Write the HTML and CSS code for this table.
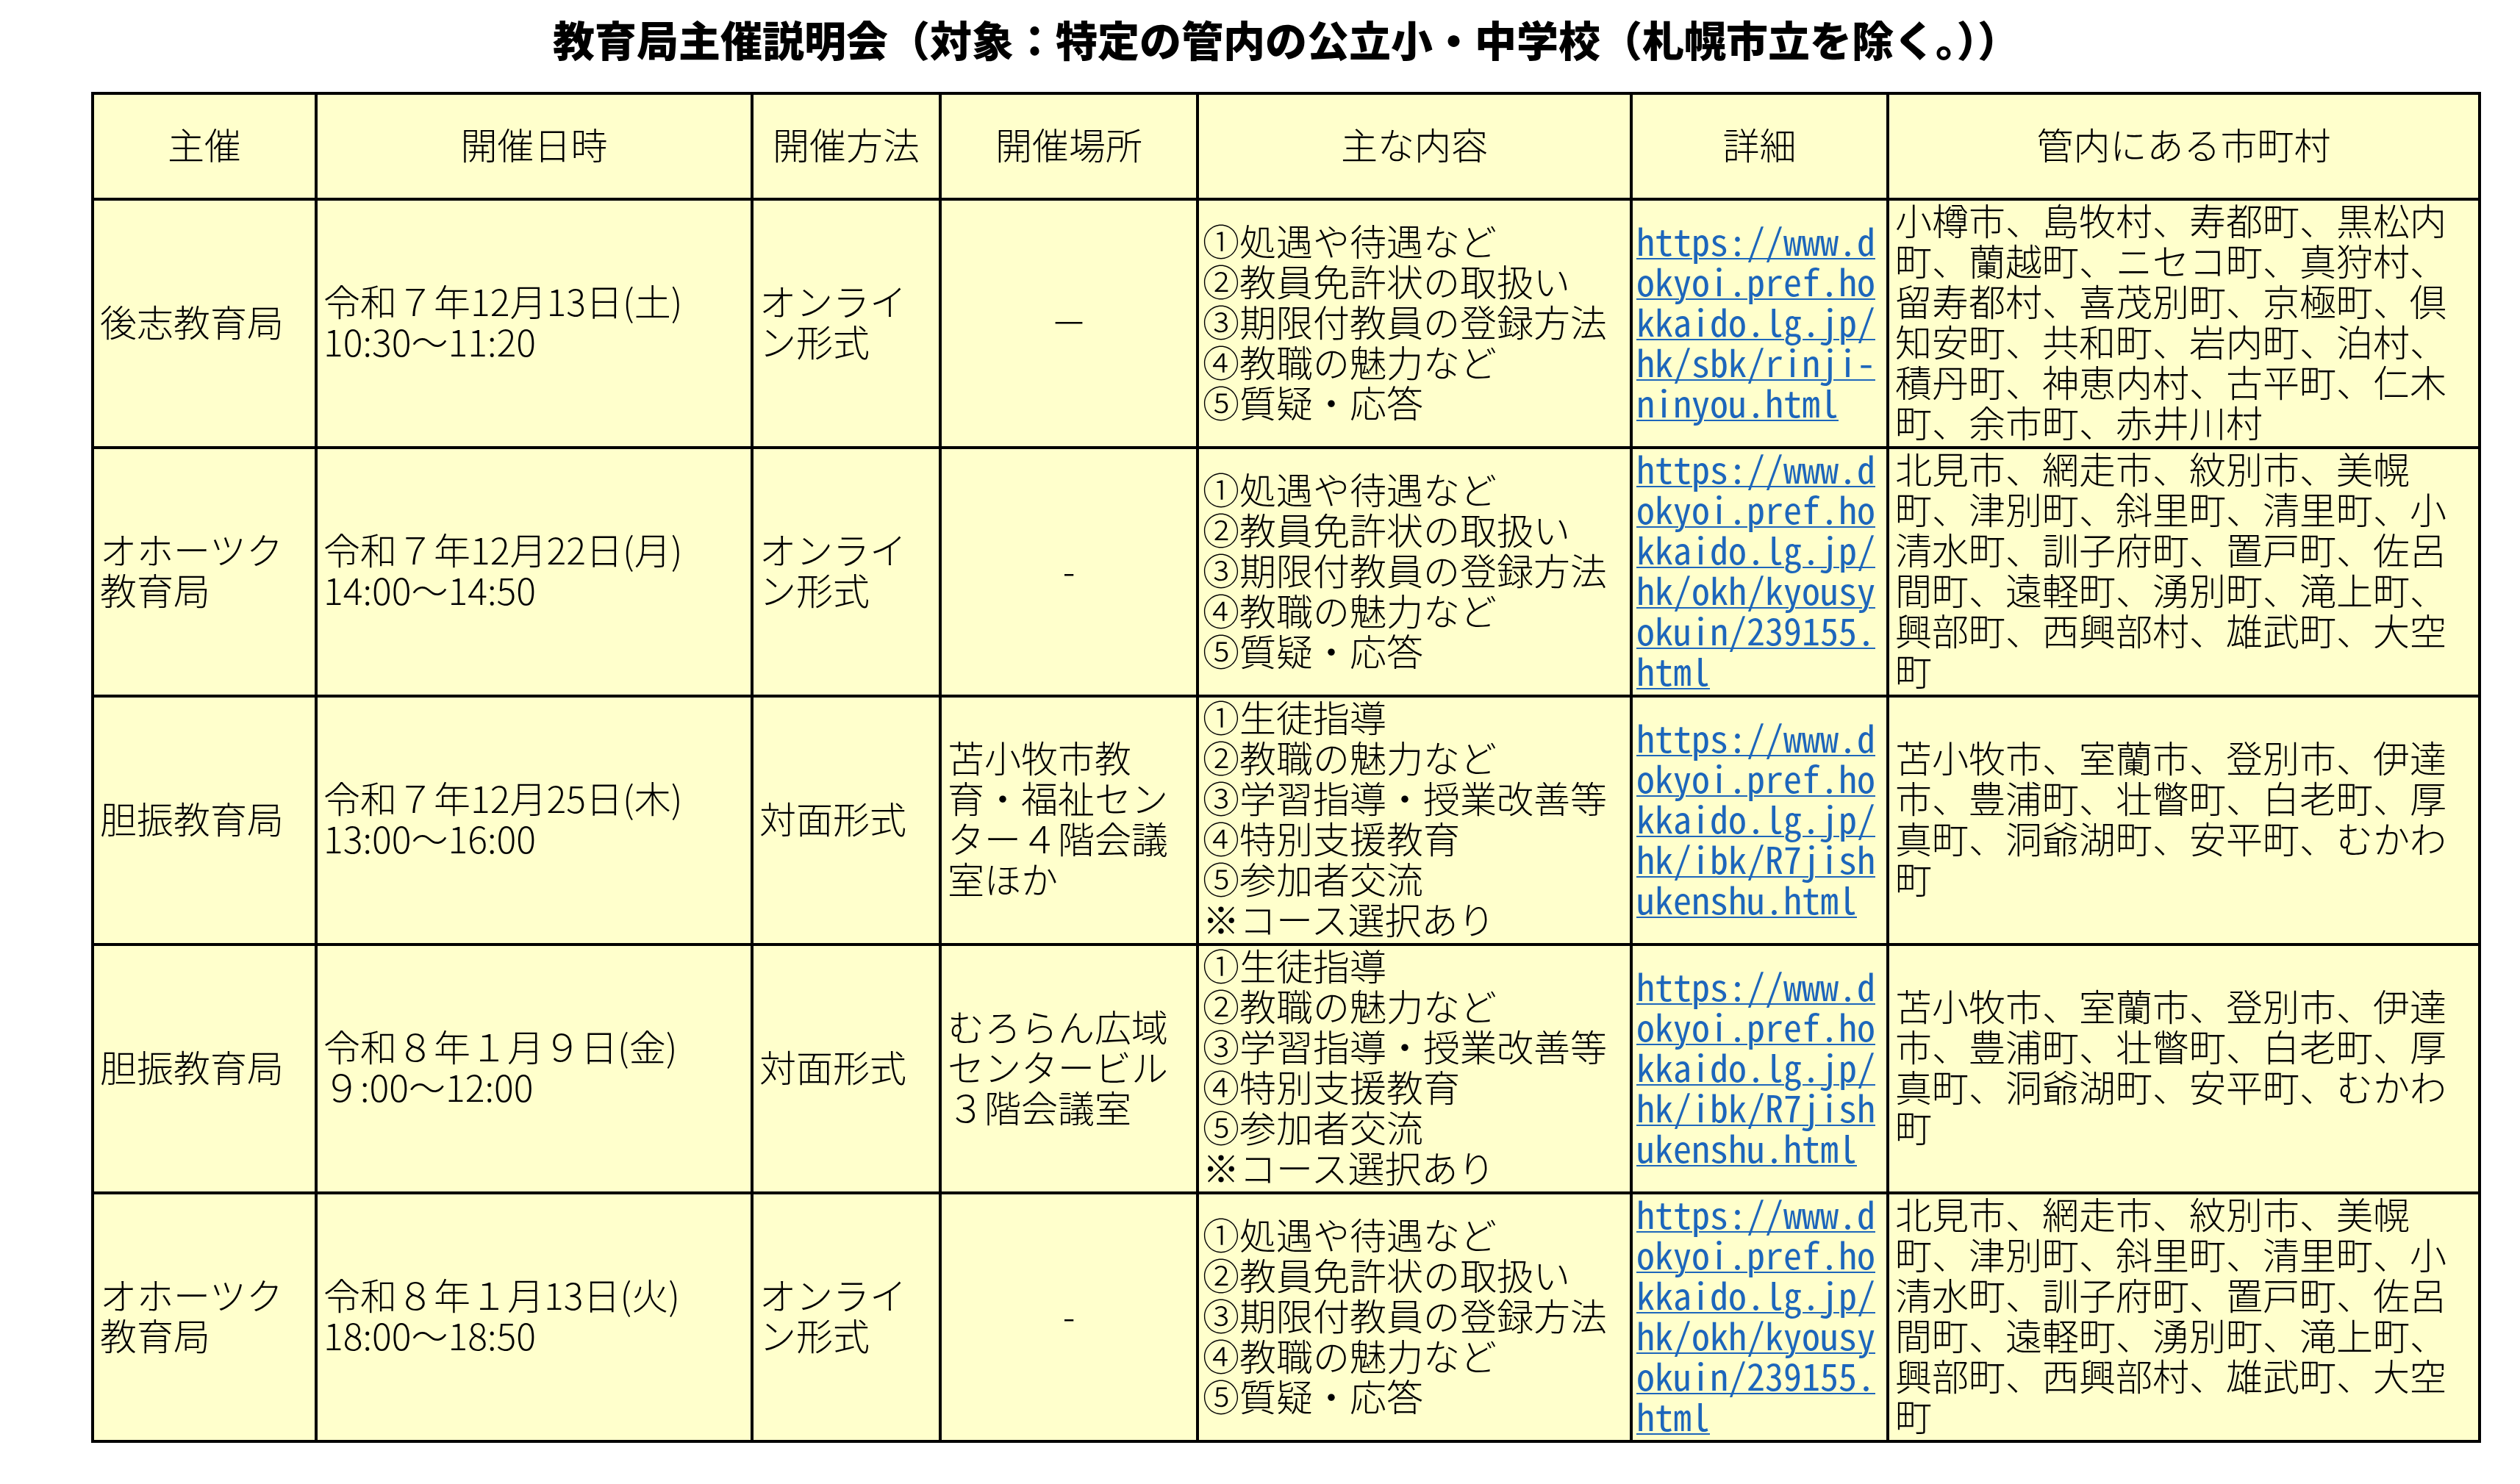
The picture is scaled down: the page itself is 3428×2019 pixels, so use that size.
FILE: index.html
```html
<!DOCTYPE html>
<html lang="ja">
<head>
<meta charset="utf-8">
<title>教育局主催説明会</title>
<link rel="stylesheet" href="styles.css">
</head>
<body>
<div class="page">
  <h1 class="title">教育局主催説明会（対象：特定の管内の公立小・中学校（札幌市立を除く。））</h1>
  <div class="sheet">
    <div class="c h">主催</div>
    <div class="c h">開催日時</div>
    <div class="c h">開催方法</div>
    <div class="c h">開催場所</div>
    <div class="c h">主な内容</div>
    <div class="c h">詳細</div>
    <div class="c h">管内にある市町村</div>

    <div class="c">後志教育局</div>
    <div class="c">令和７年12月13日(土)<br>10:30～11:20</div>
    <div class="c">オンライ<br>ン形式</div>
    <div class="c center">－</div>
    <div class="c tight">①処遇や待遇など<br>②教員免許状の取扱い<br>③期限付教員の登録方法<br>④教職の魅力など<br>⑤質疑・応答</div>
    <div class="c link"><a href="#" class="url">https://www.d<br>okyoi.pref.ho<br>kkaido.lg.jp/<br>hk/sbk/rinji-<br>ninyou.html</a></div>
    <div class="c">小樽市、島牧村、寿都町、黒松内<br>町、蘭越町、ニセコ町、真狩村、<br>留寿都村、喜茂別町、京極町、倶<br>知安町、共和町、岩内町、泊村、<br>積丹町、神恵内村、古平町、仁木<br>町、余市町、赤井川村</div>

    <div class="c">オホーツク<br>教育局</div>
    <div class="c">令和７年12月22日(月)<br>14:00～14:50</div>
    <div class="c">オンライ<br>ン形式</div>
    <div class="c center">-</div>
    <div class="c tight">①処遇や待遇など<br>②教員免許状の取扱い<br>③期限付教員の登録方法<br>④教職の魅力など<br>⑤質疑・応答</div>
    <div class="c link"><a href="#" class="url">https://www.d<br>okyoi.pref.ho<br>kkaido.lg.jp/<br>hk/okh/kyousy<br>okuin/239155.<br>html</a></div>
    <div class="c">北見市、網走市、紋別市、美幌<br>町、津別町、斜里町、清里町、小<br>清水町、訓子府町、置戸町、佐呂<br>間町、遠軽町、湧別町、滝上町、<br>興部町、西興部村、雄武町、大空<br>町</div>

    <div class="c">胆振教育局</div>
    <div class="c">令和７年12月25日(木)<br>13:00～16:00</div>
    <div class="c">対面形式</div>
    <div class="c">苫小牧市教<br>育・福祉セン<br>ター４階会議<br>室ほか</div>
    <div class="c tight">①生徒指導<br>②教職の魅力など<br>③学習指導・授業改善等<br>④特別支援教育<br>⑤参加者交流<br>※コース選択あり</div>
    <div class="c link"><a href="#" class="url">https://www.d<br>okyoi.pref.ho<br>kkaido.lg.jp/<br>hk/ibk/R7jish<br>ukenshu.html</a></div>
    <div class="c">苫小牧市、室蘭市、登別市、伊達<br>市、豊浦町、壮瞥町、白老町、厚<br>真町、洞爺湖町、安平町、むかわ<br>町</div>

    <div class="c">胆振教育局</div>
    <div class="c">令和８年１月９日(金)<br>９:00～12:00</div>
    <div class="c">対面形式</div>
    <div class="c">むろらん広域<br>センタービル<br>３階会議室</div>
    <div class="c tight">①生徒指導<br>②教職の魅力など<br>③学習指導・授業改善等<br>④特別支援教育<br>⑤参加者交流<br>※コース選択あり</div>
    <div class="c link"><a href="#" class="url">https://www.d<br>okyoi.pref.ho<br>kkaido.lg.jp/<br>hk/ibk/R7jish<br>ukenshu.html</a></div>
    <div class="c">苫小牧市、室蘭市、登別市、伊達<br>市、豊浦町、壮瞥町、白老町、厚<br>真町、洞爺湖町、安平町、むかわ<br>町</div>

    <div class="c">オホーツク<br>教育局</div>
    <div class="c">令和８年１月13日(火)<br>18:00～18:50</div>
    <div class="c">オンライ<br>ン形式</div>
    <div class="c center">-</div>
    <div class="c tight">①処遇や待遇など<br>②教員免許状の取扱い<br>③期限付教員の登録方法<br>④教職の魅力など<br>⑤質疑・応答</div>
    <div class="c link"><a href="#" class="url">https://www.d<br>okyoi.pref.ho<br>kkaido.lg.jp/<br>hk/okh/kyousy<br>okuin/239155.<br>html</a></div>
    <div class="c">北見市、網走市、紋別市、美幌<br>町、津別町、斜里町、清里町、小<br>清水町、訓子府町、置戸町、佐呂<br>間町、遠軽町、湧別町、滝上町、<br>興部町、西興部村、雄武町、大空<br>町</div>
  </div>
</div>
</body>
</html>
```

FILE: styles.css
```css
html, body {
  margin: 0;
  padding: 0;
  background: #ffffff;
}

body {
  font-family: "Noto Sans CJK JP", "Noto Sans", sans-serif;
  color: #000;
}

.page {
  padding-left: 124px;
}

.title {
  box-sizing: border-box;
  width: 3251px;
  height: 125px;
  margin: 0;
  padding-top: 24px;
  text-align: center;
  font-size: 57px;
  line-height: 57px;
  font-weight: 900;
}

.sheet {
  display: grid;
  grid-template-columns: 304px 593px 256px 350px 590px 349px 805px;
  grid-template-rows: 144px repeat(5, 338px);
  width: max-content;
  border-top: 4px solid #000;
  border-left: 4px solid #000;
  background: #ffffcc;
}

.c {
  box-sizing: border-box;
  display: flex;
  align-items: center;
  padding: 0 8px 8px 8px;
  border-right: 4px solid #000;
  border-bottom: 4px solid #000;
  font-size: 50px;
  line-height: 55px;
  font-weight: 300;
  white-space: nowrap;
}

.h {
  justify-content: center;
}

.center {
  justify-content: center;
}

.tight {
  padding-left: 5px;
}

.link {
  padding-left: 5px;
}

.url {
  font-family: "Noto Sans Mono CJK JP", "Liberation Mono", monospace;
  font-size: 50px;
  line-height: 55px;
  color: #1d66bb;
  text-decoration: underline;
  text-decoration-thickness: 2px;
  text-underline-offset: 3px;
}
```
